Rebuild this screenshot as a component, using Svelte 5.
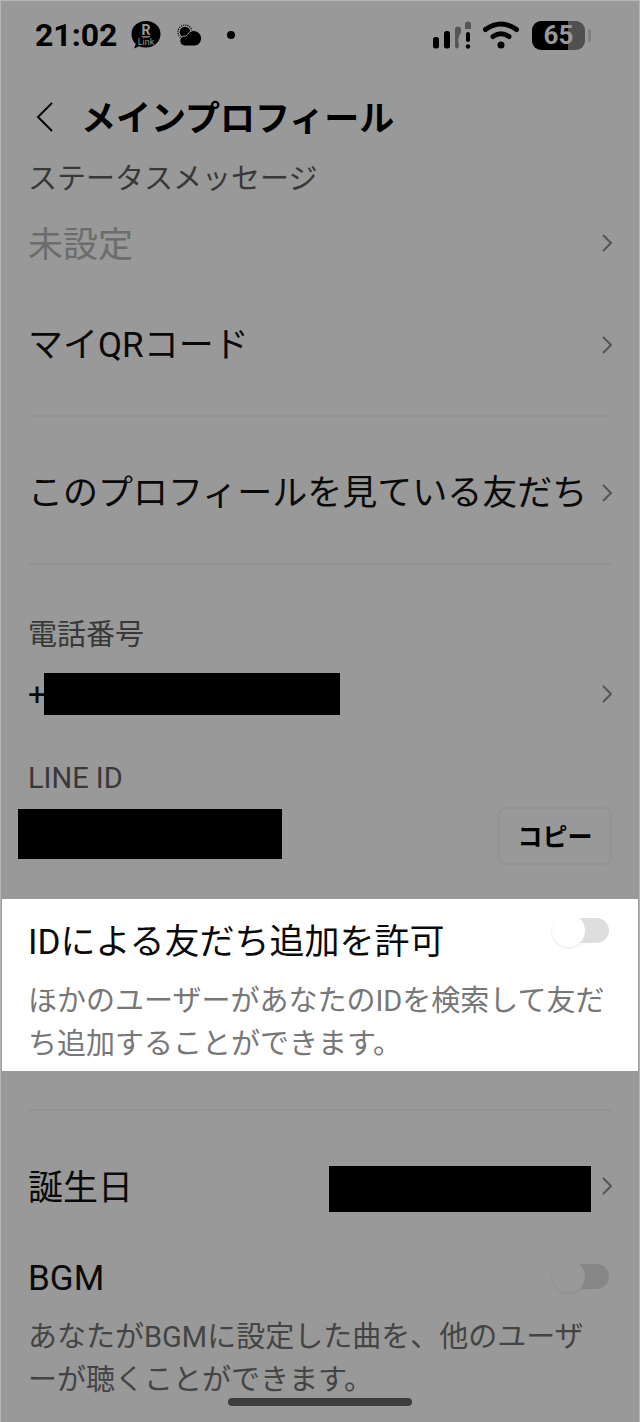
<script>
let allowById=$state(false);
let bgm=$state(false);
</script>

{#snippet chevron()}
    <svg class="chevron" width="12" height="18" viewBox="0 0 12 18" aria-hidden="true">
        <path d="M3 1l8 8-8 8" fill="none" stroke="currentColor" stroke-width="2"/>
    </svg>
{/snippet}

<div class="screen">
    <div class="status">
        <span class="time">21:02</span>
        <svg class="link-app" width="30" height="28" viewBox="0 0 30 28" role="img" aria-label="Rakuten Link">
            <path d="M15 0C23.500 0 29.500 5.500 29.500 13S23.500 26.500 15 26.500c-2.500 0-4.800-.4-6.700-1.300L3 27.500l1.800-4.600C2 20.500.5 17 .5 13 .5 5.500 6.500 0 15 0z"/>
            <text class="r" x="15" y="14" text-anchor="middle">R</text>
            <path d="M10 15.200h10l-2 1.200h-6z" fill="#999"/>
            <text class="link" x="15" y="24" text-anchor="middle">Link</text>
        </svg>
        <svg class="weather" width="26" height="24" viewBox="0 0 26 24" aria-hidden="true">
            <circle cx="8" cy="9" r="7" fill="none" stroke="#000" stroke-width="1.200" stroke-dasharray="1.200 1"/>
            <circle cx="8" cy="9" r="5.300"/>
            <path d="M7.500 23a5 5 0 0 1-1-9.800 4 4 0 0 0 4-1.500A7 7 0 0 1 16 7.500c4.600 0 8.500 3.300 8.500 7.800S21 23 17.500 23z" stroke="#999"/>
        </svg>
        <span class="dot"></span>
        <svg class="signal" width="40" height="28" viewBox="0 0 40 28" aria-hidden="true">
            <rect x="0" y="16" width="6" height="11.500" rx="2.500"/>
            <rect x="11" y="10" width="6" height="17.500" rx="2.500"/>
            <path d="M22 8.500q0-3 3-3t3 3v3q-4 5-2 14-1 2-2.500 2-1.500-.3-1.500-2.500z" fill="#555"/>
            <path d="M32 3.500q0-3 3-3t3 3V8h-6z" fill="#555"/>
            <rect x="33" y="11" width="4" height="10" rx="2"/>
            <circle cx="35" cy="25.500" r="2.200"/>
        </svg>
        <svg class="wifi" width="36" height="28" viewBox="0 0 36 28" aria-hidden="true">
            <g fill="none" stroke="#000" stroke-width="5" stroke-linecap="round">
                <path d="M2.500 8.500Q18-2.500 33.500 8.500"/>
                <path d="M10 15.500q8-5.500 16 0"/>
            </g>
            <circle cx="18" cy="24" r="3.500"/>
        </svg>
        <span class="battery"><span>65</span></span>
        <span class="cap"></span>
    </div>

    <header>
        <button class="back" aria-label="戻る">
            <svg width="18" height="32" viewBox="0 0 18 32" aria-hidden="true">
                <path d="M17 2L3 16l14 14" fill="none" stroke="#000" stroke-width="2"/>
            </svg>
        </button>
        <h1>メインプロフィール</h1>
    </header>

    <main>
        <section>
            <div class="label">ステータスメッセージ</div>
            <button class="row message"><span class="text unset">未設定</span>{@render chevron()}</button>
            <button class="row link-row"><span class="text">マイQRコード</span>{@render chevron()}</button>
        </section>
        <hr>
        <section>
            <button class="row link-row"><span class="text">このプロフィールを見ている友だち</span>{@render chevron()}</button>
        </section>
        <hr>
        <section class="contact">
            <div class="label">電話番号</div>
            <button class="row phone">
                <span class="number">+<i class="mask"></i></span>
                {@render chevron()}
            </button>
            <div class="label">LINE ID</div>
            <div class="row line-id">
                <i class="mask"></i>
                <button class="copy">コピー</button>
            </div>
        </section>
        <section class="setting highlight">
            <div class="row">
                <label class="text" for="allow">IDによる友だち追加を許可</label>
                <input id="allow" type="checkbox" role="switch" bind:checked={allowById}>
            </div>
            <p>ほかのユーザーがあなたのIDを検索して友だち追加することができます。</p>
        </section>
        <hr class="after">
        <section class="birth">
            <button class="row"><span class="text">誕生日</span><i class="mask"></i>{@render chevron()}</button>
        </section>
        <section class="setting">
            <div class="row">
                <label class="text" for="bgm">BGM</label>
                <input id="bgm" type="checkbox" role="switch" bind:checked={bgm}>
            </div>
            <p>あなたがBGMに設定した曲を、他のユーザーが聴くことができます。</p>
        </section>
    </main>
    <div class="home"></div>
</div>

<style>
:global(body){
    background:#999;
}
.screen{
    position:relative;
    box-sizing:border-box;
    min-height:100vh;
    padding-bottom:16px;
    overflow:hidden;
    border:1px solid #b4b7b5;
    border-bottom:0;
    background:#999;
    color:#0a0a0a;
    font-family:Roboto, "Noto Sans CJK JP", sans-serif;
    font-size:35px;
    line-height:46px;
}
button{
    padding:0;
    border:0;
    background:none;
    color:inherit;
    font:inherit;
    text-align:left;
    cursor:pointer;
}
.status{
    display:flex;
    align-items:center;
    height:68px;
    padding:0 48px 0 34px;
    color:#000;
}
.time{
    font-size:32px;
    font-weight:700;
}
.link-app{
    margin-left:14px;
    overflow:visible;
}
.r, .link{
    fill:#999;
    font-family:Roboto, sans-serif;
}
.r{
    font-size:14px;
    font-weight:700;
}
.link{
    font-size:9px;
}
.weather{
    margin-left:16px;
}
.dot{
    width:8px;
    height:8px;
    margin-left:24px;
    border-radius:50%;
    background:#000;
}
.signal{
    margin-left:auto;
}
.wifi{
    margin-left:10px;
}
.battery{
    display:flex;
    align-items:center;
    justify-content:center;
    width:53px;
    height:29px;
    margin-left:13px;
    border-radius:9px;
    background:linear-gradient(90deg, #000 68%, #505050 68%);
    color:#999;
    font-size:26px;
    font-weight:700;
}
.cap{
    width:3px;
    height:13px;
    margin-left:3px;
    border-radius:0 2px 2px 0;
    background:#808080;
}
header{
    display:flex;
    align-items:center;
    gap:28px;
    padding:22px 27px 15px 34px;
}
.back{
    display:flex;
}
h1{
    margin:0;
    padding-top:6px;
    color:#000;
    font-size:35px;
    font-weight:700;
}
section{
    padding:0 27px;
}
.label{
    color:#383838;
    font-size:29px;
    line-height:42px;
}
.row{
    display:flex;
    align-items:center;
    justify-content:space-between;
    width:100%;
    white-space:nowrap;
}
.text{
    padding-top:6px;
}
.chevron{
    flex:none;
    color:#555;
}
.message{
    margin-top:17px;
}
.unset{
    color:#6c6c6c;
}
.link-row{
    margin:52px 0 46px;
}
.link-row .text{
    padding-top:2px;
}
hr{
    height:2px;
    margin:0 27px;
    border:0;
    background:#939393;
}
.contact{
    padding-top:49px;
    padding-bottom:34px;
}
.mask{
    display:block;
    background:#000;
}
.phone{
    height:42px;
    margin:17px 0 42px;
}
.number{
    display:flex;
    align-items:center;
    font-size:32px;
}
.phone .mask{
    width:296px;
    height:42px;
    margin-left:-2px;
}
.line-id{
    align-items:flex-start;
    margin-top:8px;
}
.line-id .mask{
    width:264px;
    height:50px;
    margin:2px 0 0 -10px;
}
.copy{
    box-sizing:border-box;
    width:114px;
    height:58px;
    padding-top:4px;
    border:2px solid #939393;
    border-radius:8px;
    color:#000;
    font-size:25px;
    font-weight:700;
    text-align:center;
}
.setting p{
    margin:14px 0 0;
    color:#444;
    font-size:29px;
    line-height:43px;
}
.highlight{
    margin:0 1px;
    padding:15px 26px 5px;
    background:#fff;
}
.highlight .row{
    align-items:flex-start;
}
.highlight p{
    color:#777;
}
.after{
    margin-top:38px;
}
.birth{
    padding-top:49px;
    padding-bottom:38px;
}
.birth .mask{
    width:262px;
    height:46px;
    margin:6px 9px 0 auto;
}
input{
    appearance:none;
    position:relative;
    flex:none;
    width:52px;
    height:25px;
    margin:4px 3px;
    border-radius:13px;
    background:#868686;
    cursor:pointer;
}
input::before{
    content:"";
    position:absolute;
    top:-4px;
    left:-5px;
    width:33px;
    height:33px;
    border-radius:50%;
    background:#999;
    box-shadow:0 1px 2px #8c8c8c;
}
input:checked::before{
    left:24px;
}
.highlight input{
    background:#dedede;
}
.highlight input::before{
    background:#fff;
    box-shadow:0 1px 3px #e4e4e4;
}
.home{
    position:absolute;
    bottom:16px;
    left:50%;
    width:184px;
    height:8px;
    border-radius:4px;
    background:#3c3e3d;
    transform:translateX(-50%);
}
</style>
